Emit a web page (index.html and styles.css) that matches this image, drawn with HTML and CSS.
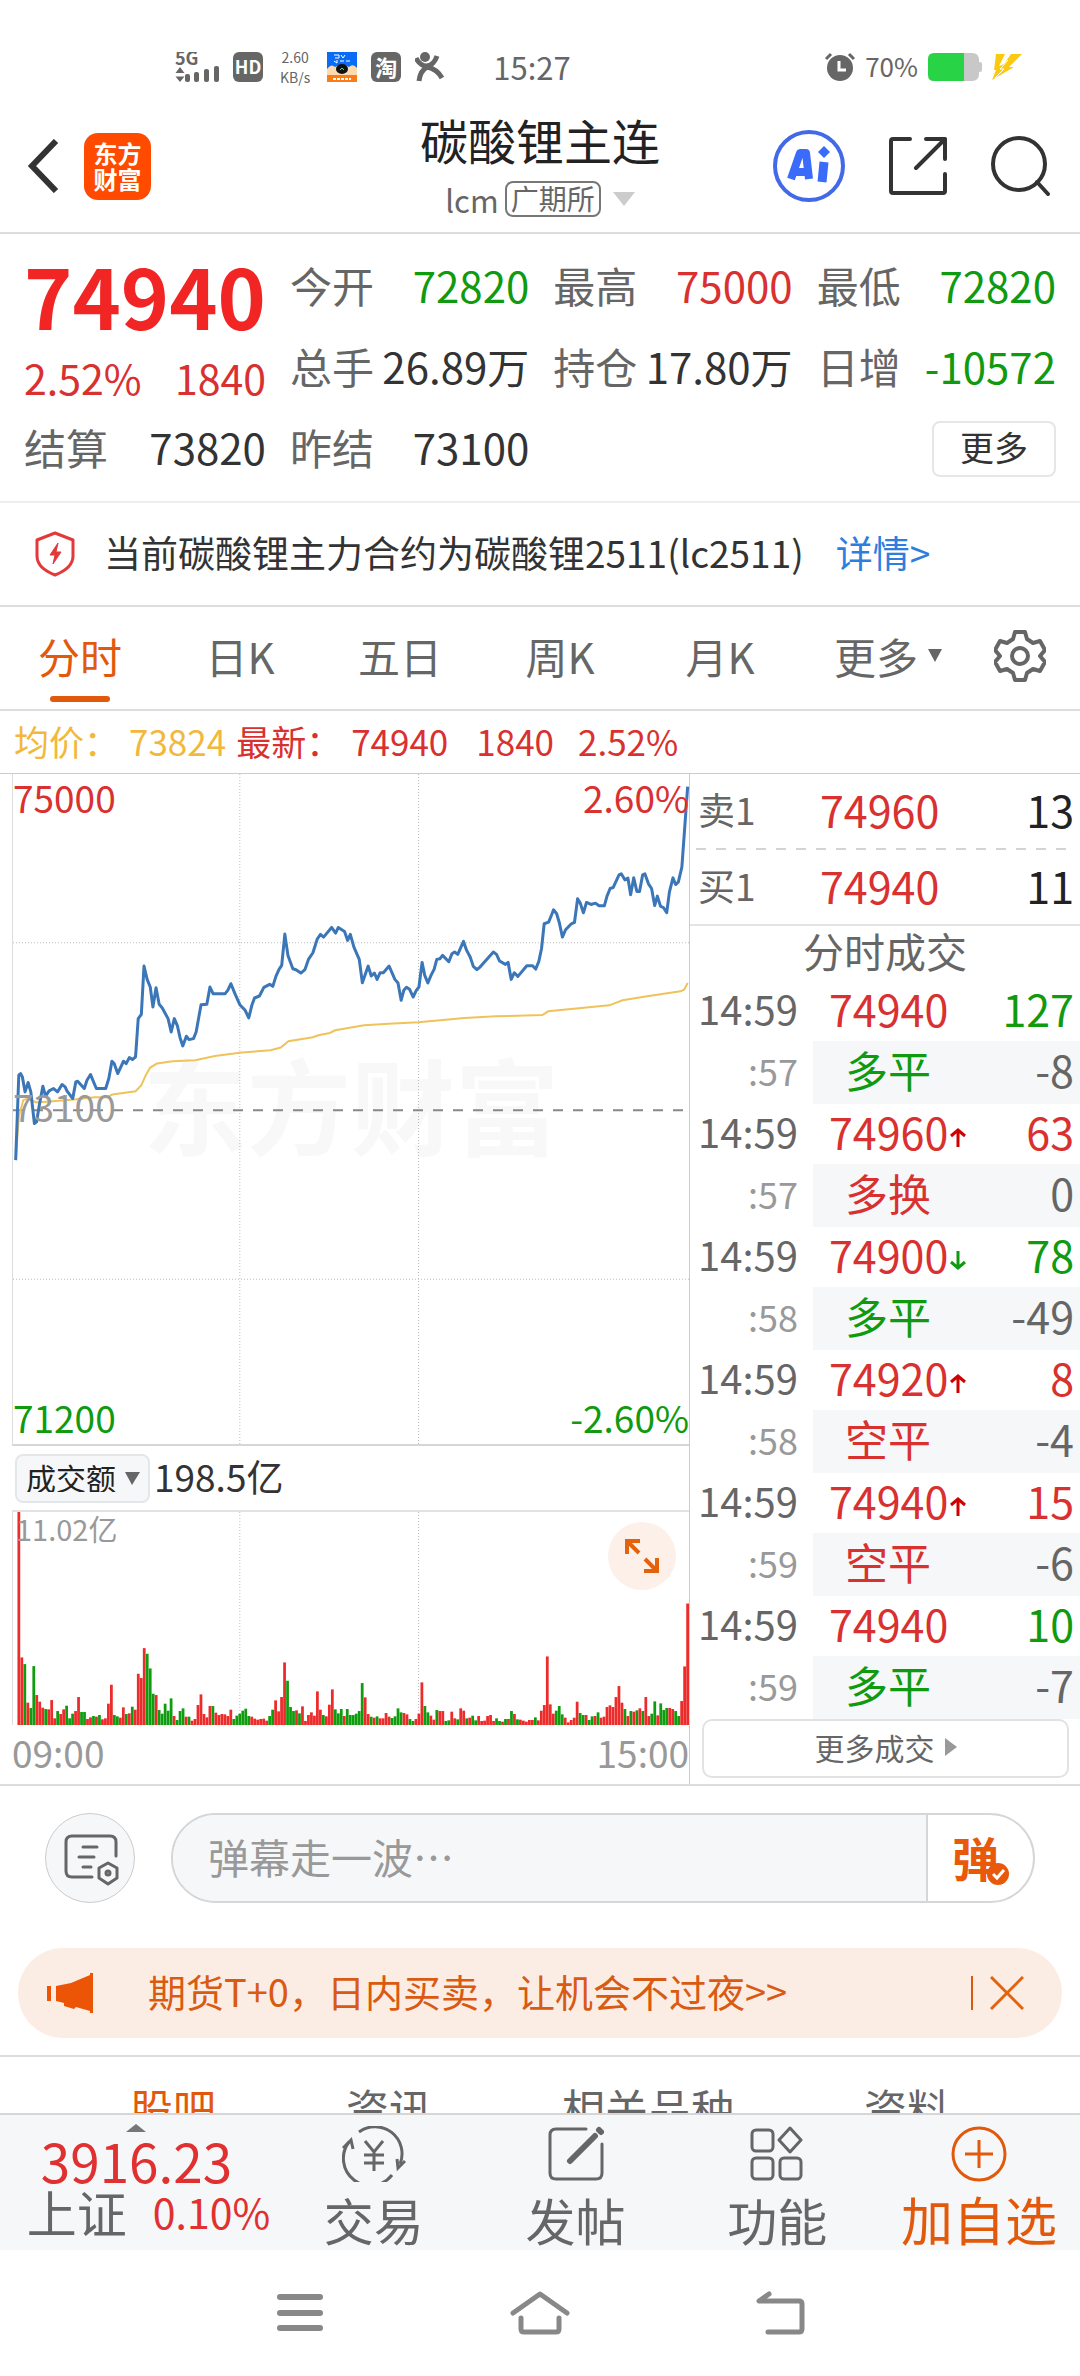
FILE: index.html
```html
<!DOCTYPE html>
<html lang="zh-CN">
<head>
    <meta charset="UTF-8">
    <meta name="viewport" content="width=device-width, initial-scale=1.0">
    <title>碳酸锂主连</title>
    <link rel="stylesheet" href="styles.css">
</head>
<body>
    <div class="status-bar">
        <div class="status-left">
            <svg width="44" height="30" viewBox="0 0 44 30" fill="#666">
                <text x="0" y="13" class="net-text">5G</text>
                <path d="M5 15l4.500 6h-9zM5 30l4.500-5.500h-9z"/>
                <rect x="10" y="22" width="5" height="8" rx="2"/>
                <rect x="19" y="20" width="5" height="10" rx="2"/>
                <rect x="29" y="17" width="5" height="13" rx="2"/>
                <rect x="39" y="14" width="5" height="16" rx="2"/>
            </svg>
            <span class="badge badge-hd">HD</span>
            <span class="net-speed">2.60<br>KB/s</span>
            <svg width="30" height="30" viewBox="0 0 30 30">
                <rect width="30" height="30" fill="#0a6cf5"/>
                <path d="M7 3h5v3H8M14 3l2 3 2-3M7 9l3 2V8M13 9h4M19 9h4" stroke="#fff" fill="none"/>
                <path d="M0 17q4-6 8-2 7-5 14 0 4-4 8 1v8H0z" fill="#ffd9b0"/>
                <ellipse cx="15" cy="17" rx="6" ry="5" fill="#111"/>
                <path d="M13 18l2-2 2 2" stroke="#5fd0b0" fill="none"/>
                <rect y="23" width="30" height="7" fill="#fb7b16"/>
                <path d="M6 27h18" stroke="#fff" stroke-width="2" stroke-dasharray="3 1"/>
            </svg>
            <span class="badge badge-tao">淘</span>
            <svg width="30" height="30" viewBox="0 0 30 30" fill="none" stroke="#666" stroke-width="5">
                <circle cx="10" cy="5" r="5" fill="#666" stroke="none"/>
                <path d="M1 6q4 8 11 8 7-1 10-10M4 29q1-10 8-14 10 2 15 11"/>
            </svg>
        </div>
        <span class="clock">15:27</span>
        <div class="status-right">
            <svg width="30" height="30" viewBox="0 0 30 30">
                <circle cx="15" cy="16" r="13" fill="#666"/>
                <path d="M1 7l5-5M29 7l-5-5" stroke="#666" stroke-width="3"/>
                <path d="M14 9v9h7" stroke="#fff" stroke-width="3" fill="none"/>
            </svg>
            <span class="battery-text">70%</span>
            <svg width="54" height="28" viewBox="0 0 54 28">
                <path d="M36 0h8q7 0 7 7v14q0 7-7 7h-8z" fill="#c8c8c8"/>
                <rect x="50" y="9" width="4" height="10" rx="2" fill="#c8c8c8"/>
                <path d="M6 0h30v28H6q-6 0-6-6V6q0-6 6-6z" fill="#28d445"/>
            </svg>
            <svg width="30" height="26" viewBox="0 0 30 26" fill="#fbc90f">
                <path d="M4 0h9L7 12l5-2 7-10h11L17 13h5L0 26l4-10H2z"/>
                <path d="M3 24l9-9-4 0 8-9" fill="none" stroke="#fff"/>
            </svg>
        </div>
    </div>

    <header class="header">
        <div class="header-left">
            <button class="icon-btn" aria-label="返回">
                <svg width="32" height="54" viewBox="0 0 32 54" fill="none" stroke="#333" stroke-width="6"><path d="M29 2L5 27l24 25"/></svg>
            </button>
            <span class="logo">东方<br>财富</span>
        </div>
        <div class="header-title">
            <h1>碳酸锂主连</h1>
            <p class="subtitle">lcm <span class="exchange">广期所</span>
                <svg width="22" height="14" viewBox="0 0 22 14" fill="#ccc"><path d="M0 0h22L11 14z"/></svg>
            </p>
        </div>
        <div class="header-right">
            <button class="icon-btn" aria-label="Ai">
                <svg width="72" height="72" viewBox="0 0 72 72">
                    <circle cx="36" cy="36" r="34" fill="none" stroke="#4169e8" stroke-width="4"/>
                    <g fill="none" stroke="#3a6bfb" stroke-width="7">
                        <path d="M18 49l9-26h6l3 26M22 42h13" stroke-width="8" stroke-linejoin="round"/>
                        <path d="M51 32l-2 20" stroke-width="9"/>
                    </g>
                    <path d="M51 16l6 6-6 6-6-6z" fill="#3a6bfb"/>
                </svg>
            </button>
            <button class="icon-btn" aria-label="分享">
                <svg width="58" height="58" viewBox="0 0 58 58" fill="none" stroke="#333" stroke-width="4" stroke-linecap="round" stroke-linejoin="round">
                    <path d="M21 2H4q-2 0-2 2v50q0 2 2 2h50q2 0 2-2V37M37 2h19v20M56 2L27 31"/>
                </svg>
            </button>
            <button class="icon-btn" aria-label="搜索">
                <svg width="60" height="60" viewBox="0 0 60 60" fill="none" stroke="#333" stroke-width="4" stroke-linecap="round">
                    <circle cx="28" cy="28" r="26"/><path d="M46 46l11 12"/>
                </svg>
            </button>
        </div>
    </header>

    <main class="content">
        <section class="quote">
            <div class="price-cell">
                <strong class="price">74940</strong>
                <div class="change red"><span>2.52%</span><span>1840</span></div>
            </div>
            <div class="cell"><span>今开</span><b class="green">72820</b></div>
            <div class="cell"><span>最高</span><b class="red">75000</b></div>
            <div class="cell"><span>最低</span><b class="green">72820</b></div>
            <div class="cell"><span>总手</span><b>26.89万</b></div>
            <div class="cell"><span>持仓</span><b>17.80万</b></div>
            <div class="cell"><span>日增</span><b class="green">-10572</b></div>
            <div class="cell"><span>结算</span><b>73820</b></div>
            <div class="cell"><span>昨结</span><b>73100</b></div>
            <div class="cell-more"><button class="more-btn">更多</button></div>
        </section>

        <section class="notice">
            <svg width="40" height="46" viewBox="0 0 40 46" fill="none" stroke="#e23a3a" stroke-width="3" stroke-linejoin="round">
                <path d="M20 2l18 7v16q0 12-18 19Q2 37 2 25V9z"/>
                <path d="M23 12l-8 12h5l-2 9 8-12h-5z" fill="#e23a3a" stroke-width="1"/>
            </svg>
            <span class="notice-text">当前碳酸锂主力合约为碳酸锂2511(lc2511)</span>
            <a href="#">详情&gt;</a>
        </section>

        <nav class="chart-tabs">
            <button class="active">分时</button>
            <button>日K</button>
            <button>五日</button>
            <button>周K</button>
            <button>月K</button>
            <button class="has-caret">更多<svg width="14" height="13" viewBox="0 0 14 13" fill="#666"><path d="M0 0h14L7 13z"/></svg></button>
            <button aria-label="设置">
                <svg width="52" height="52" viewBox="0 0 52 52" fill="none" stroke="#666" stroke-width="4" stroke-linejoin="round">
                    <path d="M21 2h10l2 7 6 4 7-2 5 9-5 6 5 6-5 9-7-2-6 4-2 7H21l-2-7-6-4-7 2-5-9 5-6-5-6 5-9 7 2 6-4z"/>
                    <circle cx="26" cy="26" r="8"/>
                </svg>
            </button>
        </nav>

        <div class="info-line">
            <span class="yellow">均价：</span><span class="yellow num">73824</span>
            <span class="red">最新：</span><span class="red num">74940</span>
            <span class="red num-gap">1840</span><span class="red num-gap">2.52%</span>
        </div>

        <section class="market">
            <div class="charts">
                <div class="price-chart">
                    <span class="watermark">东方财富</span>
                    <svg class="plot" viewBox="27 40 1517 2013" preserveAspectRatio="none" fill="none">
                        <path class="grid-line" d="M536 40V2053M937 40V2053M27 547H1544M27 1558H1544"/>
                        <path class="mid-line" d="M27 1050H1544"/>
                        <polyline class="avg-line" id="avg-line"/>
                        <polyline class="price-line" id="price-line"/>
                    </svg>
                    <span class="axis top-left red">75000</span>
                    <span class="axis top-right red">2.60%</span>
                    <span class="axis middle">73100</span>
                    <span class="axis bottom-left green">71200</span>
                    <span class="axis bottom-right green">-2.60%</span>
                </div>
                <div class="volume-head">
                    <div class="select-wrap">
                        <select aria-label="指标"><option>成交额</option></select>
                        <svg width="15" height="13" viewBox="0 0 15 13" fill="#666"><path d="M0 0h15L7 13z"/></svg>
                    </div>
                    <span class="volume-total">198.5亿</span>
                </div>
                <div class="volume-chart">
                    <svg class="plot" viewBox="27 245 1517 640" preserveAspectRatio="none" fill="none">
                        <path class="grid-line" d="M536 245V885M937 245V885"/>
                        <g id="bars"></g>
                    </svg>
                    <span class="volume-max">11.02亿</span>
                    <button class="expand-btn" aria-label="全屏">
                        <svg width="34" height="34" viewBox="0 0 34 34" fill="none" stroke="#e2620e" stroke-width="4">
                            <path d="M2 15V2h13M3 3l11 11M32 19v13H19M31 31L20 20"/>
                        </svg>
                    </button>
                </div>
                <div class="time-axis"><span>09:00</span><span>15:00</span></div>
            </div>

            <div class="trades">
                <div class="depth"><span>卖1</span><b>74960</b><i>13</i></div>
                <div class="depth-split"></div>
                <div class="depth"><span>买1</span><b>74940</b><i>11</i></div>
                <h2>分时成交</h2>
                <table>
                    <tbody id="trade-rows"></tbody>
                </table>
                <button class="more-trades">更多成交
                    <svg width="12" height="18" viewBox="0 0 12 18" fill="#999"><path d="M0 0l12 9-12 9z"/></svg>
                </button>
            </div>
        </section>

        <div class="danmu">
            <button class="danmu-setting" aria-label="弹幕设置">
                <svg width="56" height="52" viewBox="0 0 56 52" fill="none" stroke="#666" stroke-width="3" stroke-linecap="round" stroke-linejoin="round">
                    <path d="M28 43H8q-6 0-6-6V8q0-6 6-6h38q6 0 6 6v14M19 13h14M15 23h15M19 33h8"/>
                    <path d="M44 29l9 5v10l-9 6-9-6V34z"/><circle cx="44" cy="39" r="2"/>
                </svg>
            </button>
            <div class="danmu-box">
                <input type="text" placeholder="弹幕走一波⋯" aria-label="弹幕">
                <button class="danmu-send">弹
                    <svg class="check" width="22" height="22" viewBox="0 0 22 22"><circle cx="11" cy="11" r="11" fill="#e8590c"/><path d="M6 11l4 4 7-8" fill="none" stroke="#fff" stroke-width="3"/></svg>
                </button>
            </div>
        </div>

        <div class="banner">
            <svg width="46" height="40" viewBox="0 0 46 40" fill="#eb5505">
                <path d="M0 13h4v15H0zM9 13l15-3L43 2V0h3v40h-3v-2l-14-4-2 2-10-3v-3l-8-2z"/>
            </svg>
            <a href="#">期货T+0，日内买卖，让机会不过夜&gt;&gt;</a>
            <button class="close-btn" aria-label="关闭">
                <svg width="34" height="34" viewBox="0 0 34 34" fill="none" stroke="#e2620e" stroke-width="3"><path d="M1 1l32 32M33 1L1 33"/></svg>
            </button>
        </div>

        <nav class="section-tabs">
            <a href="#" class="active">股吧</a>
            <a href="#">资讯</a>
            <a href="#">相关品种</a>
            <a href="#">资料</a>
        </nav>
    </main>

    <footer class="toolbar">
        <button class="index-item">
            <svg width="20" height="8" viewBox="0 0 20 8" fill="#777"><path d="M10 0l10 8H0z"/></svg>
            <span class="index-value">3916.23</span>
            <span class="index-row"><span>上证</span><span class="index-pct">0.10%</span></span>
        </button>
        <button>
            <svg width="64" height="56" viewBox="0 0 64 56" fill="none" stroke="#666" stroke-width="3">
                <path d="M17 6A27 27 0 0 1 58 38M50 49A27 27 0 0 1 7 16"/>
                <path d="M1 22l8-8 2 9M63 35l-7 7-1-9M23 15l9 11 9-11M22 29h20M22 37h20M32 26v19"/>
            </svg>
            <span>交易</span>
        </button>
        <button>
            <svg width="56" height="56" viewBox="0 0 56 56" fill="none" stroke="#666" stroke-width="3" stroke-linecap="round">
                <path d="M38 3H8q-6 0-6 6v38q0 6 6 6h40q6 0 6-6V18"/>
                <path d="M51 4l2 2M47 10L22 35" stroke-width="6"/>
            </svg>
            <span>发帖</span>
        </button>
        <button>
            <svg width="54" height="56" viewBox="0 0 54 56" fill="none" stroke="#666" stroke-width="3">
                <rect x="2" y="4" width="21" height="21" rx="4"/>
                <path d="M40 2l11 12-11 12-11-12z" stroke-linejoin="round"/>
                <rect x="2" y="32" width="21" height="21" rx="4"/><rect x="30" y="32" width="21" height="21" rx="4"/>
            </svg>
            <span>功能</span>
        </button>
        <button class="add-btn">
            <svg width="56" height="56" viewBox="0 0 56 56" fill="none" stroke="#e2590c" stroke-width="3">
                <circle cx="28" cy="28" r="26"/><path d="M14 28h28M28 14v28"/>
            </svg>
            <span>加自选</span>
        </button>
    </footer>

    <nav class="system-nav">
        <button aria-label="菜单"><svg width="46" height="38" viewBox="0 0 46 38" fill="#888"><rect width="46" height="6" rx="3"/><rect y="16" width="46" height="6" rx="3"/><rect y="31" width="46" height="6" rx="3"/></svg></button>
        <button aria-label="主页"><svg width="60" height="44" viewBox="0 0 60 44" fill="none" stroke="#888" stroke-width="5" stroke-linecap="round" stroke-linejoin="round"><path d="M3 22L30 3l27 19M11 27v11q0 3 3 3h32q3 0 3-3V27"/></svg></button>
        <button aria-label="后退"><svg width="50" height="44" viewBox="0 0 50 44" fill="none" stroke="#888" stroke-width="5" stroke-linecap="round" stroke-linejoin="round"><path d="M14 3L4 10h40q3 0 3 3v25q0 3-3 3H13"/></svg></button>
    </nav>

    <script src="script.js"></script>
</body>
</html>
```
FILE: styles.css
```css
* {
    box-sizing: border-box;
}
body {
    margin: 0;
    height: 100vh;
    display: flex;
    flex-direction: column;
    background-color: #fff;
    color: #333;
    font-family: "Noto Sans CJK SC", sans-serif;
    font-size: 42px;
    line-height: 1;
}
button, input, select {
    font: inherit;
    color: inherit;
    border: none;
    background: none;
    padding: 0;
    margin: 0;
}
a {
    color: inherit;
    text-decoration: none;
}
svg {
    display: block;
    flex-shrink: 0;
}
h1, h2, p {
    margin: 0;
    font-weight: 400;
}
b, i {
    font-weight: 400;
    font-style: normal;
}
.red {
    color: #d93030;
}
.green {
    color: #109a10;
}
.yellow {
    color: #f2b83c;
}

/* status bar */
.status-bar {
    flex-shrink: 0;
    display: flex;
    align-items: center;
    height: 100px;
    padding: 34px 58px 0 175px;
    color: #666;
}
.status-left, .status-right {
    display: flex;
    align-items: center;
    gap: 14px;
}
.net-text {
    font-size: 18px;
    font-weight: 700;
}
.badge {
    width: 30px;
    height: 30px;
    border-radius: 6px;
    background-color: #666;
    color: #fff;
    text-align: center;
    font-weight: 700;
    line-height: 29px;
}
.badge-hd {
    font-size: 18px;
}
.badge-tao {
    font-size: 22px;
}
.net-speed {
    font-size: 14px;
    line-height: 20px;
    text-align: center;
    margin: 0 3px;
}
.clock {
    font-size: 31px;
    margin-left: 48px;
    padding-bottom: 2px;
}
.status-right {
    margin-left: auto;
    gap: 10px;
}
.battery-text {
    font-size: 26px;
    padding-bottom: 2px;
}

/* header */
.header {
    flex-shrink: 0;
    display: grid;
    grid-template-columns: 1fr auto 1fr;
    align-items: center;
    height: 134px;
    border-bottom: 2px solid #ddd;
}
.header-left {
    display: flex;
    align-items: center;
    gap: 25px;
    padding-left: 27px;
}
.logo {
    width: 67px;
    padding: 7px 0 8px;
    border-radius: 14px;
    background-color: #ff4a00;
    color: #fff;
    font-size: 24px;
    font-weight: 700;
    line-height: 26px;
    text-align: center;
}
.header-title {
    padding-bottom: 6px;
}
.header-title h1 {
    font-size: 48px;
    line-height: 60px;
    text-align: center;
    color: #222;
}
.subtitle {
    display: flex;
    align-items: center;
    justify-content: center;
    gap: 6px;
    margin-top: 12px;
    font-size: 31px;
    color: #666;
}
.exchange {
    border: 2px solid #777;
    border-radius: 8px;
    margin-right: 6px;
    padding: 0 4px 2px;
    font-size: 28px;
    line-height: 30px;
}
.header-right {
    display: flex;
    align-items: center;
    justify-content: flex-end;
    gap: 44px;
    padding-right: 29px;
}

/* content */
.content {
    flex: 1;
    min-height: 0;
    overflow: hidden;
}
.quote {
    display: grid;
    grid-template-columns: repeat(4, 1fr);
    grid-auto-rows: 81px;
    column-gap: 24px;
    padding: 13px 24px 11px;
    border-bottom: 2px solid #eee;
}
.price-cell {
    grid-row: span 2;
}
.price {
    display: block;
    color: #f22525;
    font-size: 82px;
    font-weight: 700;
    line-height: 96px;
}
.change {
    display: flex;
    justify-content: space-between;
    font-size: 41px;
    line-height: 68px;
}
.cell {
    display: flex;
    align-items: center;
    justify-content: space-between;
    padding-bottom: 6px;
}
.cell span {
    color: #666;
}
.cell-more {
    grid-column: 4;
    display: flex;
    align-items: center;
    justify-content: flex-end;
    padding-bottom: 2px;
}
.more-btn {
    width: 124px;
    height: 56px;
    padding-bottom: 4px;
    border: 2px solid #e6e6e6;
    border-radius: 8px;
    font-size: 34px;
}

.notice {
    display: flex;
    align-items: center;
    height: 104px;
    padding-left: 35px;
    border-bottom: 2px solid #ddd;
    font-size: 37px;
}
.notice-text {
    margin: 0 32px 0 29px;
    padding-bottom: 4px;
}
.notice a {
    padding-bottom: 4px;
    color: #2e7ee0;
}

.chart-tabs {
    display: grid;
    grid-template-columns: repeat(6, 4fr) 3fr;
    height: 104px;
    border-bottom: 2px solid #ddd;
    color: #666;
}
.chart-tabs button {
    position: relative;
    display: flex;
    align-items: center;
    justify-content: center;
    padding-bottom: 5px;
}
.chart-tabs .active {
    color: #e2590c;
}
.chart-tabs .active::after {
    content: "";
    position: absolute;
    bottom: 7px;
    left: calc(50% - 30px);
    width: 60px;
    height: 6px;
    border-radius: 3px;
    background-color: #e2590c;
}
.chart-tabs .has-caret {
    gap: 10px;
    padding-left: 16px;
}
.info-line {
    display: flex;
    align-items: center;
    height: 62px;
    padding: 0 0 4px 14px;
    font-size: 35px;
}
.num {
    margin: 0 10px;
}
.num-gap {
    margin-left: 18px;
}
.num-gap + .num-gap {
    margin-left: 24px;
}

/* market */
.market {
    display: grid;
    grid-template-columns: minmax(0, 23fr) minmax(0, 13fr);
    border-top: 1px solid #ccc;
    border-bottom: 2px solid #ddd;
}
.charts {
    padding-left: 12px;
    border-right: 1px solid #ccc;
}
.price-chart, .volume-chart {
    position: relative;
    border-left: 1px solid #ddd;
}
.price-chart {
    height: 672px;
    border-bottom: 2px solid #d6d6d6;
}
.plot {
    position: relative;
    width: 100%;
    height: 100%;
    overflow: visible;
}
.plot path, .plot polyline {
    vector-effect: non-scaling-stroke;
}
.grid-line {
    stroke: #bbb;
    stroke-dasharray: 1 2;
}
.mid-line {
    stroke: #888;
    stroke-width: 2px;
    stroke-dasharray: 10 10;
}
.avg-line {
    stroke: #f0c35a;
    stroke-width: 2px;
}
.price-line {
    stroke: #3b76b8;
    stroke-width: 3px;
    stroke-linejoin: round;
}
.watermark {
    position: absolute;
    top: 50%;
    left: 0;
    right: 0;
    transform: translateY(-50%);
    padding-bottom: 12px;
    text-align: center;
    font-size: 104px;
    font-weight: 700;
    color: #f8f8f8;
}
.axis {
    position: absolute;
    font-size: 37px;
}
.top-left {
    top: 5px;
    left: 0;
}
.top-right {
    top: 5px;
    right: 0;
}
.middle {
    top: 50%;
    left: 0;
    transform: translateY(-50%);
    padding-bottom: 6px;
    color: #999;
}
.bottom-left {
    bottom: 8px;
    left: 0;
}
.bottom-right {
    bottom: 8px;
    right: 0;
}
.volume-head {
    display: flex;
    align-items: center;
    gap: 4px;
    height: 64px;
    padding-left: 3px;
    font-size: 37px;
}
.volume-total {
    padding-bottom: 4px;
}
.select-wrap {
    position: relative;
}
.select-wrap svg {
    position: absolute;
    right: 10px;
    top: 18px;
    pointer-events: none;
}
.select-wrap select {
    display: block;
    appearance: none;
    width: 135px;
    height: 49px;
    padding: 0 0 3px 9px;
    border: 2px solid #e4e7ea;
    border-radius: 8px;
    background-color: #f5f7f9;
    font-size: 30px;
    color: #222;
}
.volume-chart {
    height: 215px;
    border-top: 2px solid #e2e2e2;
}
.volume-max {
    position: absolute;
    top: 2px;
    left: 3px;
    font-size: 29px;
    color: #999;
}
.expand-btn {
    position: absolute;
    top: 10px;
    right: 13px;
    display: flex;
    align-items: center;
    justify-content: center;
    width: 68px;
    height: 68px;
    border-radius: 50%;
    background-color: #fdf0e9;
}
.time-axis {
    display: flex;
    justify-content: space-between;
    font-size: 37px;
    line-height: 54px;
    color: #999;
}

.depth {
    display: flex;
    align-items: center;
    height: 74px;
    padding: 0 6px 4px 8px;
    font-size: 43px;
}
.depth span {
    width: 122px;
    font-size: 37px;
    color: #666;
}
.depth b {
    color: #d93030;
}
.depth i {
    margin-left: auto;
    color: #222;
}
.depth-split {
    height: 2px;
    margin: 0 12px 0 6px;
    background: repeating-linear-gradient(to right, #d4d4d4 0 10px, transparent 10px 20px);
}
.trades h2 {
    padding-bottom: 6px;
    border-top: 2px solid #e4e4e4;
    font-size: 41px;
    line-height: 49px;
    text-align: center;
    color: #666;
}
.trades table {
    width: 100%;
    table-layout: fixed;
    border-collapse: collapse;
}
.trades td {
    height: 60px;
    padding: 0 0 6px;
    font-size: 43px;
}
.trades .deal-type td {
    height: 63px;
}
.trades .time {
    width: 123px;
    padding-right: 15px;
    text-align: right;
    font-size: 40px;
    color: #666;
}
.trades .deal-type .time {
    font-size: 36px;
    color: #999;
}
.trades .deal {
    width: 166px;
    padding-left: 16px;
}
.deal svg {
    display: inline-block;
    margin-left: 2px;
}
.trades .deal-type .deal {
    padding-left: 32px;
}
.deal-type .deal, .deal-type .count {
    background-color: #f5f7f9;
}
.trades .count {
    padding-right: 6px;
    text-align: right;
}
.deal-type .count {
    color: #666;
}
.more-trades {
    display: flex;
    align-items: center;
    justify-content: center;
    gap: 10px;
    width: calc(100% - 23px);
    height: 59px;
    margin: 0 11px 6px 12px;
    padding-bottom: 4px;
    border: 2px solid #e2e2e2;
    border-radius: 10px;
    font-size: 30px;
    color: #666;
}

/* danmu */
.danmu {
    display: flex;
    gap: 36px;
    padding: 27px 45px 45px;
}
.danmu-setting {
    display: flex;
    align-items: center;
    justify-content: center;
    width: 90px;
    height: 90px;
    padding: 4px 0 0 4px;
    border: 1px solid #ccc;
    border-radius: 50%;
    background-color: #f5f7f9;
}
.danmu-box {
    flex: 1;
    display: flex;
    height: 90px;
    border: 2px solid #d4d6d8;
    border-radius: 45px;
    overflow: hidden;
}
.danmu-box input {
    flex: 1;
    min-width: 0;
    padding: 0 0 5px 35px;
    background-color: #f5f7f9;
    font-size: 41px;
}
.danmu-box input::placeholder {
    color: #999;
    opacity: 1;
}
.danmu-send {
    position: relative;
    width: 107px;
    padding: 0 10px 4px 0;
    border-left: 2px solid #d4d6d8;
    font-size: 47px;
    font-weight: 700;
    color: #e8590c;
}
.check {
    position: absolute;
    right: 24px;
    bottom: 16px;
}
.banner {
    display: flex;
    align-items: center;
    height: 90px;
    margin: 0 18px 17px;
    padding: 0 38px 0 29px;
    border-radius: 45px;
    background-color: #fcede4;
    color: #d95a12;
    font-size: 38px;
}
.banner a {
    margin-left: 55px;
    padding-bottom: 4px;
}
.close-btn {
    margin-left: auto;
    padding-left: 17px;
    border-left: 2px solid #d95a12;
}
.section-tabs {
    display: flex;
    justify-content: space-evenly;
    border-top: 2px solid #ddd;
    font-size: 43px;
    line-height: 100px;
    color: #666;
}
.section-tabs .active {
    color: #e2590c;
}

/* bottom toolbar */
.toolbar {
    flex-shrink: 0;
    display: grid;
    grid-template-columns: 23fr repeat(4, 17fr);
    height: 137px;
    border-top: 2px solid #d6d6d6;
    background-color: #f5f7f9;
    color: #666;
    font-size: 50px;
}
.toolbar button {
    display: flex;
    flex-direction: column;
    align-items: center;
    padding-top: 11px;
    line-height: 52px;
    white-space: nowrap;
}
.toolbar button svg + span {
    margin-top: 11px;
}
.toolbar .add-btn {
    color: #e2590c;
    font-size: 52px;
}
.toolbar .index-item {
    padding-top: 9px;
}
.toolbar .index-item .index-value {
    margin-top: 0;
    font-size: 53px;
    line-height: 56px;
    color: #e03030;
}
.index-row {
    display: flex;
    gap: 26px;
    padding-left: 24px;
    line-height: 46px;
}
.index-pct {
    font-size: 41px;
    color: #e03030;
}

.system-nav {
    flex-shrink: 0;
    display: grid;
    grid-template-columns: repeat(3, 240px);
    justify-content: center;
    height: 126px;
}
.system-nav button {
    display: flex;
    align-items: center;
    justify-content: center;
}
```
FILE: script.js
```js
// Price and average lines, one "x,y" pair per turning point
const priceLine = '33,1200 40,945 44,940 48,950 54,995 61,967 67,995 75,1090 80,1085 86,1035 94,978 100,1008 108,992 118,985 127,995 137,973 144,980 148,992 161,1015 168,965 172,963 187,985 193,960 201,943 214,985 235,985 242,955 249,903 254,910 262,940 275,903 281,910 288,892 295,898 302,890 308,775 315,762 321,617 328,657 335,680 341,740 348,682 355,732 362,743 375,775 382,815 389,775 396,797 402,833 408,857 416,828 422,838 432,835 438,815 449,733 462,732 469,680 476,700 503,700 509,690 516,670 525,700 536,733 548,750 556,773 563,735 569,713 580,707 590,681 603,672 610,678 617,648 624,627 630,615 637,521 644,585 655,625 662,628 673,638 682,628 690,597 700,577 710,535 717,522 724,530 742,501 751,518 757,501 771,513 778,540 784,522 792,560 804,597 811,667 824,617 831,647 838,638 844,657 851,637 858,637 871,617 884,657 891,668 898,720 904,690 910,681 917,687 925,710 932,690 938,680 945,606 951,645 958,668 965,645 972,627 978,597 985,595 991,585 1005,604 1012,580 1018,575 1025,582 1038,543 1045,570 1053,590 1060,618 1068,628 1075,620 1105,575 1112,582 1119,602 1132,612 1138,606 1145,657 1152,637 1160,648 1180,616 1193,616 1200,626 1207,603 1213,565 1219,490 1229,485 1236,462 1240,448 1247,460 1253,487 1260,530 1267,508 1280,490 1287,486 1294,415 1300,428 1307,457 1314,426 1324,432 1334,428 1342,436 1354,436 1360,407 1367,384 1374,381 1387,343 1392,340 1400,358 1407,353 1413,403 1420,352 1427,393 1433,393 1440,343 1445,340 1453,370 1460,384 1467,435 1473,407 1480,437 1487,442 1494,457 1500,395 1508,352 1514,372 1520,365 1528,320 1541,78';
const avgLine = '33,1200 40,1070 50,1020 60,1015 80,1027 130,1022 170,1017 210,1011 238,1011 250,1003 302,993 315,975 325,945 335,922 350,910 385,903 436,900 480,887 540,877 605,870 628,862 645,843 700,831 712,825 738,818 750,810 815,795 870,790 937,786 1040,773 1110,768 1215,764 1228,753 1285,745 1365,735 1395,720 1450,708 1525,693 1533,688 1541,668';
document.getElementById('price-line').setAttribute('points', priceLine);
document.getElementById('avg-line').setAttribute('points', avgLine);

// Volume per minute, r = up, g = down
const volumes = '640r 203r 183g 67r 51g 177g 90r 70r 52r 48g 47r 75r 20r 42g 33r 47r 58g 20g 34g 42r 84r 39g 39g 18r 23r 27g 25r 30g 17r 20r 64r 121r 30g 26g 22r 53r 33g 35r 55g 46r 154r 141r 231r 214g 170g 94g 90r 45g 34g 64g 43g 80g 27r 15g 42g 50g 25r 25g 13r 18r 60r 92r 33r 23r 57r 57g 37r 30r 33r 32r 27r 46r 18g 28g 34g 43g 49g 27g 25r 19r 16r 18r 19r 13r 27g 46g 74r 41r 84r 188r 133g 54g 42g 44r 35g 56r 12r 30r 38r 28r 101r 46r 30g 26r 61r 107r 47g 35g 48g 27r 48g 30g 30g 34g 42g 126g 83r 33r 25g 22r 26g 20r 20r 36r 25r 21g 26g 50g 38g 36r 32r 18g 12g 18r 34r 128r 57g 38g 28r 16r 45g 42r 42r 12g 14g 40r 20r 17g 50r 43r 20g 22r 28g 14g 27r 12r 13r 27r 30r 12r 20g 12g 10r 18g 18r 42g 33r 17g 16r 13r 10r 15r 15r 23g 14r 43r 60r 206r 62r 34r 43g 57g 32g 22r 8r 15r 22r 70r 36g 30g 30r 15g 26g 27r 38g 22r 25r 54r 59r 54r 84r 117r 67r 48g 27r 42g 40r 44g 50r 42g 84r 27r 34g 71g 29r 65g 45g 51g 51r 48r 42g 27g 72r 176r 365r';
document.getElementById('bars').innerHTML = volumes.split(' ').map((item, i) => {
    const h = parseInt(item);
    const fill = item.endsWith('r') ? '#ec2b2b' : '#0f9d0f';
    return `<rect x="${(37 + i * 6.7).toFixed(1)}" y="${885 - h}" width="6.2" height="${h}" fill="${fill}"/>`;
}).join('');

// Latest trades: second, price, arrow, count, count colour, type, type colour, position change
const trades = [
    ['57', '74940', '', '127', 'green', '多平', 'green', '-8'],
    ['57', '74960', 'up', '63', 'red', '多换', 'red', '0'],
    ['58', '74900', 'down', '78', 'green', '多平', 'green', '-49'],
    ['58', '74920', 'up', '8', 'red', '空平', 'red', '-4'],
    ['59', '74940', 'up', '15', 'red', '空平', 'red', '-6'],
    ['59', '74940', '', '10', 'green', '多平', 'green', '-7']
];
const arrows = {
    up: '<svg width="16" height="22" viewBox="0 0 16 22" fill="none" stroke="#d00000" stroke-width="3"><path d="M8 19V2M1 8l7-6 7 6"/></svg>',
    down: '<svg width="16" height="22" viewBox="0 0 16 22" fill="none" stroke="#109a10" stroke-width="3"><path d="M8 0v17M1 11l7 6 7-6"/></svg>'
};
document.getElementById('trade-rows').innerHTML = trades.map(t => `
    <tr>
        <td class="time">14:59</td>
        <td class="deal red">${t[1]}${arrows[t[2]] || ''}</td>
        <td class="count ${t[4]}">${t[3]}</td>
    </tr>
    <tr class="deal-type">
        <td class="time">:${t[0]}</td>
        <td class="deal ${t[6]}">${t[5]}</td>
        <td class="count">${t[7]}</td>
    </tr>`).join('');
```
